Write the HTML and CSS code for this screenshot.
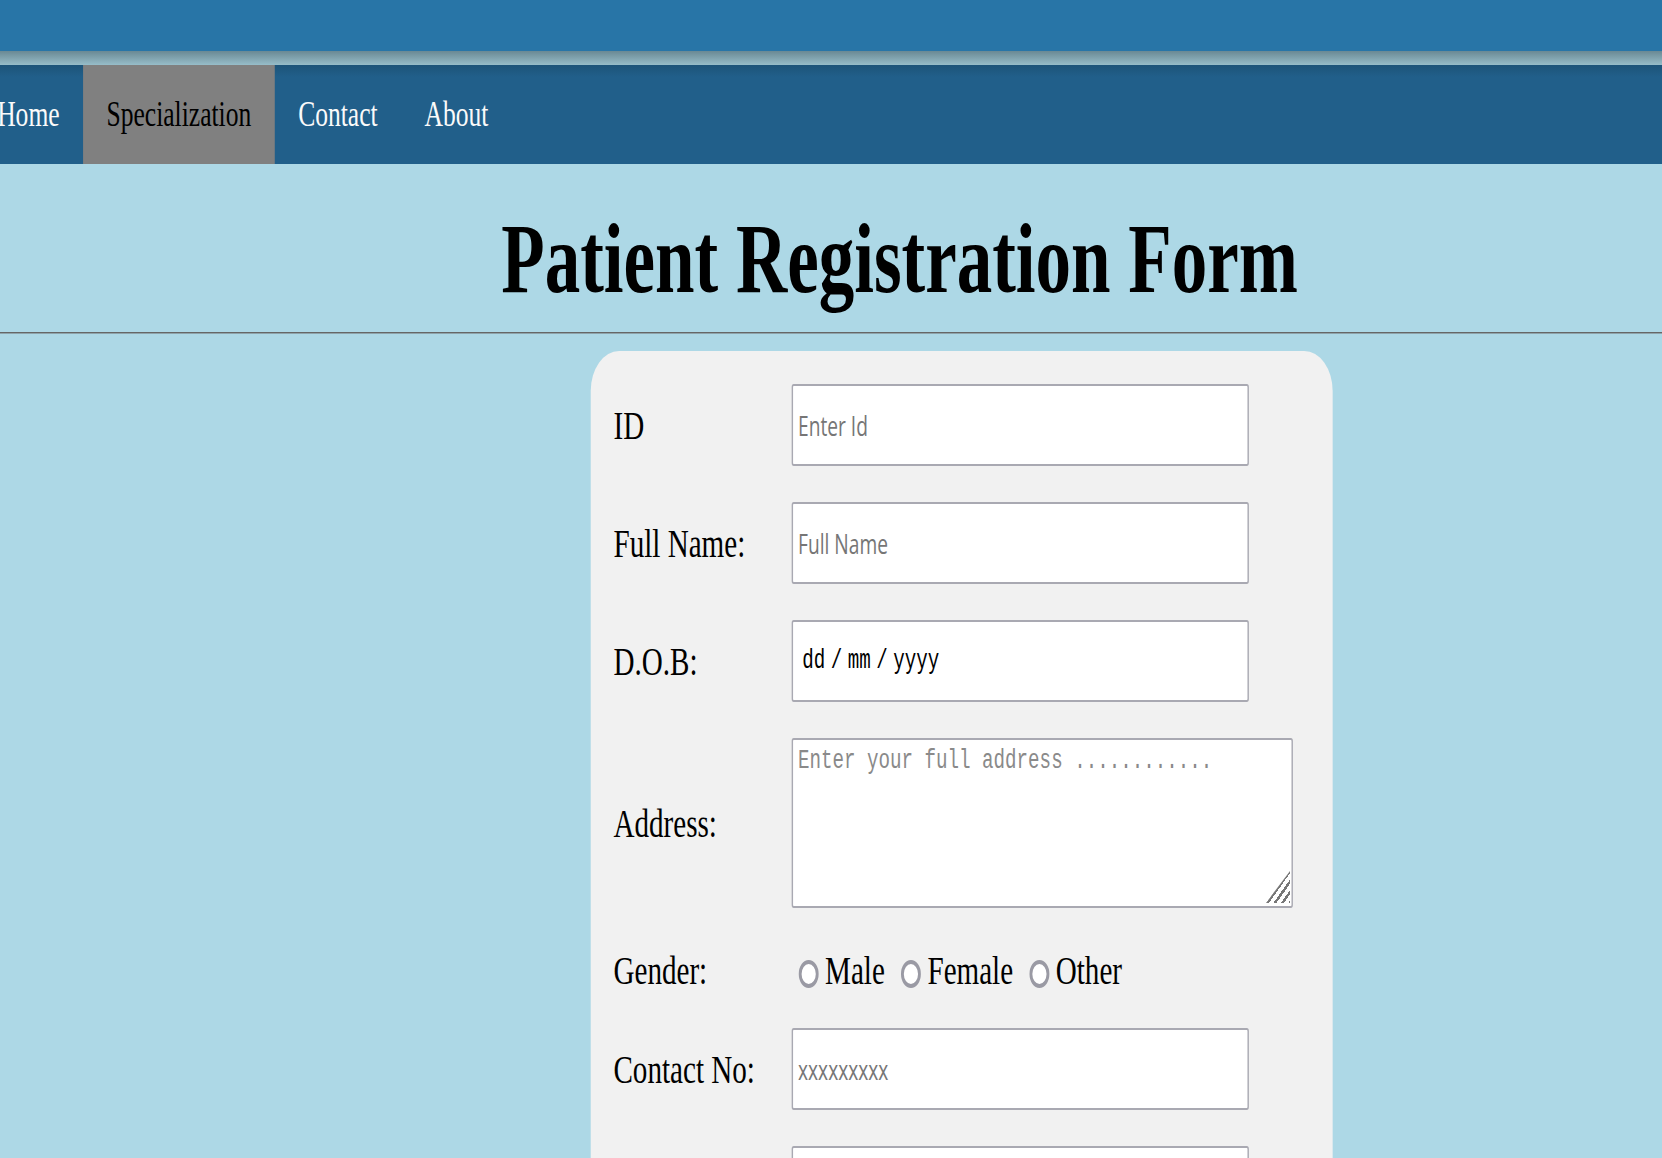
FILE: index.html
```html
<!DOCTYPE html>
<html lang="en">
<head>
<meta charset="utf-8">
<title>Patient Registration Form</title>
<link rel="stylesheet" href="styles.css">
</head>
<body>
<div class="page">
  <header class="topbar"></header>
  <div class="shade"></div>
  <nav class="nav">
    <ul class="menu">
      <li><a href="#">Home</a></li>
      <li class="active"><a href="#">Specialization</a></li>
      <li><a href="#">Contact</a></li>
      <li><a href="#">About</a></li>
    </ul>
  </nav>
  <h1 class="title">Patient Registration Form</h1>
  <hr class="rule">
  <form class="card">
    <label class="lbl" for="pid">ID</label>
    <input class="field" id="pid" type="text" placeholder="Enter Id">

    <label class="lbl" for="pname">Full Name:</label>
    <input class="field" id="pname" type="text" placeholder="Full Name">

    <label class="lbl" for="pdob">D.O.B:</label>
    <input class="field date" id="pdob" type="text" value="dd / mm / yyyy">

    <label class="lbl" for="paddr">Address:</label>
    <div class="area-wrap">
      <textarea class="area" id="paddr" placeholder="Enter your full address ............"></textarea>
      <span class="grip"></span>
    </div>

    <span class="lbl row-gender">Gender:</span>
    <div class="choices row-gender">
      <label class="opt"><input class="radio" type="radio" name="gender">Male</label>
      <label class="opt"><input class="radio" type="radio" name="gender">Female</label>
      <label class="opt"><input class="radio" type="radio" name="gender">Other</label>
    </div>

    <label class="lbl" for="pcontact">Contact No:</label>
    <input class="field" id="pcontact" type="text" placeholder="xxxxxxxxx">

    <label class="lbl" for="pemail">Email:</label>
    <input class="field" id="pemail" type="text">
  </form>
</div>
</body>
</html>
```

FILE: styles.css
```css
html, body {
  margin: 0;
  padding: 0;
  overflow: hidden;
}

body {
  background: #add8e6;
  font-family: "Liberation Serif", "Times New Roman", serif;
  color: #000;
}

/* the whole capture is horizontally squeezed */
.page {
  width: 2341px;
  transform: scaleX(0.71);
  transform-origin: 0 0;
}

.topbar {
  height: 51px;
  background: #2875a7;
}

.shade {
  height: 14px;
  background: linear-gradient(#6a8994, #97bdc9);
}

.nav {
  height: 99px;
  background: linear-gradient(#1d5479, #215f8a 12px);
}

.menu {
  list-style: none;
  margin: 0 0 0 -37px;
  padding: 0;
  display: flex;
}

.menu a {
  display: block;
  padding: 0 33px;
  line-height: 99px;
  font-size: 36px;
  color: #fafafa;
  text-decoration: none;
}

.menu .active a {
  background: #808080;
  color: #000;
}

.title {
  margin: 37px 0 16px;
  padding-left: 706px;
  font-size: 100px;
  line-height: 115px;
  font-weight: bold;
}

.rule {
  margin: 0;
  height: 0;
  border: 0;
  border-top: 1px solid #666;
  border-bottom: 1px solid #8ea3aa;
}

.card {
  margin: 17px 0 0 832px;
  width: 1045px;
  box-sizing: border-box;
  padding: 33px 118px 40px 32px;
  background: #f1f1f1;
  border-radius: 40px;
  display: grid;
  grid-template-columns: 251px auto;
  row-gap: 36px;
  align-items: center;
  justify-items: start;
}

.lbl {
  font-size: 41px;
}

.field {
  box-sizing: border-box;
  width: 644px;
  height: 82px;
  margin: 0;
  border: 2px solid #a9a9b2;
  border-radius: 3px;
  padding: 0 7px;
  background: #fff;
  font-family: "Open Sans", "Liberation Sans", Arial, sans-serif;
  font-size: 27px;
  color: #000;
}

.field::placeholder {
  color: #767676;
}

.date {
  font-family: "Liberation Mono", "Courier New", monospace;
  font-size: 27px;
  word-spacing: -8.5px;
  padding-left: 13px;
}

.area-wrap {
  position: relative;
  display: block;
  width: 706px;
  height: 170px;
}

.area {
  display: block;
  box-sizing: border-box;
  width: 706px;
  height: 170px;
  margin: 0;
  border: 2px solid #a9a9b2;
  border-radius: 3px;
  padding: 6px 7px;
  background: #fff;
  font-family: "Liberation Mono", "Courier New", monospace;
  font-size: 27px;
  resize: none;
}

.area::placeholder {
  color: #8a8a8a;
}

.grip {
  position: absolute;
  right: 4px;
  bottom: 5px;
  width: 34px;
  height: 32px;
  background: repeating-linear-gradient(135deg, #777 0 3px, transparent 3px 7.5px);
  clip-path: polygon(100% 0, 100% 100%, 0 100%);
}

.row-gender {
  box-sizing: border-box;
  height: 48px;
  padding-top: 4px;
  display: flex;
  align-items: center;
}

.choices {
  font-size: 41px;
}

.opt {
  display: flex;
  align-items: center;
  margin-right: 13px;
}

.radio {
  appearance: none;
  -webkit-appearance: none;
  box-sizing: border-box;
  width: 28px;
  height: 28px;
  margin: 8px 9px 0 10px;
  border: 4px solid #9a9aa4;
  border-radius: 50%;
  background: #fff;
}
```
